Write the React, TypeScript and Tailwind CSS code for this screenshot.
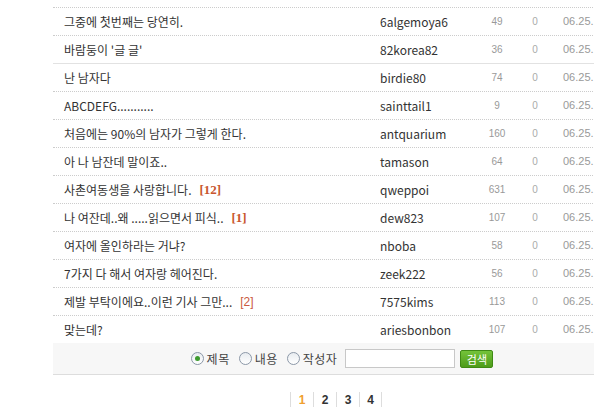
import React from 'react';

interface Post {
  title: string;
  comments?: string;
  commentStyle?: 'bold' | 'plain';
  author: string;
  views: number;
  votes: number;
  date: string;
  solidTop?: boolean;
}

const posts: Post[] = [
  { title: '그중에 첫번째는 당연히.', author: '6algemoya6', views: 49, votes: 0, date: '06.25.' },
  { title: "바람둥이 '글 글'", author: '82korea82', views: 36, votes: 0, date: '06.25.' },
  { title: '난 남자다', author: 'birdie80', views: 74, votes: 0, date: '06.25.', solidTop: true },
  { title: 'ABCDEFG...........', author: 'sainttail1', views: 9, votes: 0, date: '06.25.' },
  { title: '처음에는 90%의 남자가 그렇게 한다.', author: 'antquarium', views: 160, votes: 0, date: '06.25.' },
  { title: '아 나 남잔데 말이죠..', author: 'tamason', views: 64, votes: 0, date: '06.25.' },
  { title: '사촌여동생을 사랑합니다.', comments: '[12]', commentStyle: 'bold', author: 'qweppoi', views: 631, votes: 0, date: '06.25.' },
  { title: '나 여잔데..왜 .....읽으면서 피식..', comments: '[1]', commentStyle: 'bold', author: 'dew823', views: 107, votes: 0, date: '06.25.' },
  { title: '여자에 올인하라는 거냐?', author: 'nboba', views: 58, votes: 0, date: '06.25.' },
  { title: '7가지 다 해서 여자랑 헤어진다.', author: 'zeek222', views: 56, votes: 0, date: '06.25.' },
  { title: '제발 부탁이에요..이런 기사 그만...', comments: '[2]', commentStyle: 'plain', author: '7575kims', views: 113, votes: 0, date: '06.25.' },
  { title: '맞는데?', author: 'ariesbonbon', views: 107, votes: 0, date: '06.25.' },
];

const font = "font-['Noto_Sans_CJK_KR','Liberation_Sans',sans-serif]";

function Radio({ label, checked }: { label: string; checked?: boolean }) {
  return (
    <label className="flex items-center gap-[3px]">
      <span className="flex h-[13px] w-[13px] items-center justify-center rounded-full border border-[#8c98a8] bg-[linear-gradient(#e8ecf0,#ffffff)]">
        {checked ? <span className="h-[5px] w-[5px] rounded-full bg-[#3d9a2e]" /> : null}
      </span>
      <span className="text-[12px] leading-[14px] tracking-[0.5px] text-[#444]">{label}</span>
    </label>
  );
}

function PostRow({ post }: { post: Post }) {
  const border = post.solidTop
    ? 'border-t border-solid border-[#e2e2e2]'
    : 'border-t border-dotted border-[#cccccc]';
  return (
    <div className={`flex h-[28px] items-center ${border}`}>
      <div className="flex w-[327px] items-center pl-[11px] text-[12px] leading-[14px] text-[#333]">
        <span>{post.title}</span>
        {post.comments ? (
          post.commentStyle === 'bold' ? (
            <span className="ml-[8px] font-['Liberation_Serif',serif] text-[13px] font-bold text-[#c8562e]">
              {post.comments}
            </span>
          ) : (
            <span className="ml-[8px] font-['Liberation_Sans',sans-serif] text-[12px] text-[#c95a40]">
              {post.comments}
            </span>
          )
        ) : null}
      </div>
      <div className="w-[97px] text-[12px] leading-[14px] text-[#333]">{post.author}</div>
      <div className="w-[40px] text-center font-['Liberation_Sans',sans-serif] text-[10px] text-[#999]">{post.views}</div>
      <div className="w-[36px] text-center font-['Liberation_Sans',sans-serif] text-[10px] text-[#aaa]">{post.votes}</div>
      <div className="flex-1 pl-[10px] font-['Liberation_Sans',sans-serif] text-[11px] text-[#999]">{post.date}</div>
    </div>
  );
}

export default function App() {
  return (
    <div className={`h-[409px] w-[594px] overflow-hidden bg-white ${font}`}>
      <div className="ml-[53px] w-[574px] pt-[7px]">
        {posts.map((post) => (
          <PostRow key={post.author} post={post} />
        ))}

        <div className="flex h-[32px] items-center justify-center gap-[9px] border-b border-[#dddddd] bg-[#f7f7f7] pl-[4px]">
          <Radio label="제목" checked />
          <Radio label="내용" />
          <Radio label="작성자" />
          <input className="ml-[-1px] h-[19px] w-[110px] border border-[#c8c8c8] bg-white outline-none" />
          <button className="ml-[-4px] h-[18px] w-[33px] rounded-[2px] border border-[#3f8a15] bg-[linear-gradient(#74c33a,#4e9c1a)] text-[11px] leading-[14px] text-white">
            검색
          </button>
        </div>

        <div className="flex justify-center pr-[8px] pt-[17px]">
          {['1', '2', '3', '4'].map((n, i) => (
            <div
              key={n}
              className={`flex h-[15px] w-[23px] items-center justify-center border-l border-[#dddddd] font-['Liberation_Sans',sans-serif] text-[12px] font-bold ${
                i === 3 ? 'border-r' : ''
              } ${n === '1' ? 'text-[#f0a030]' : 'text-[#333]'}`}
            >
              {n}
            </div>
          ))}
        </div>
      </div>
    </div>
  );
}
